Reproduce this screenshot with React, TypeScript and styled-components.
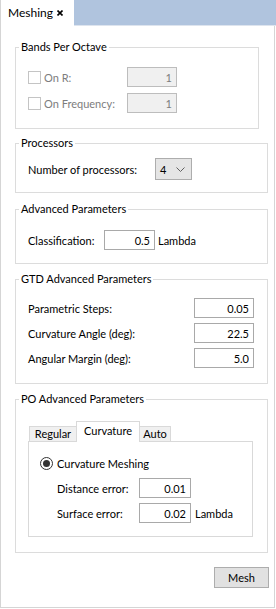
import React from 'react';
import styled, { createGlobalStyle } from 'styled-components';

const GlobalStyle = createGlobalStyle`
    html, body {
        margin: 0;
        padding: 0;
        background: #ffffff;
    }
    body {
        font-family: Lato, 'Liberation Sans', sans-serif;
        font-size: 11px;
        color: #000000;
    }
`;

type GroupProps = {
    $width: number;
    $pt: number;
    $pb: number;
    $mt: number;
};

const App = () => {
    return (
        <Window>
            <GlobalStyle />
            <TabStrip>
                <DocTab>
                    <span>Meshing</span>
                    <CloseIcon viewBox="0 0 6 6" width="6" height="6">
                        <path d="M0.5 0.5 L5.5 5.5 M5.5 0.5 L0.5 5.5" />
                    </CloseIcon>
                </DocTab>
            </TabStrip>
            <Panel>
                <Group $width={244} $pt={19} $pb={15} $mt={0}>
                    <GroupTitle>Bands Per Octave</GroupTitle>
                    <Rows $gap={6}>
                        <FieldRow $label={99}>
                            <CheckLabel>
                                <Checkbox />
                                <span>On R:</span>
                            </CheckLabel>
                            <NumberBox $w={50} disabled defaultValue="1" />
                        </FieldRow>
                        <FieldRow $label={99}>
                            <CheckLabel>
                                <Checkbox />
                                <span>On Frequency:</span>
                            </CheckLabel>
                            <NumberBox $w={50} disabled defaultValue="1" />
                        </FieldRow>
                    </Rows>
                </Group>

                <Group $width={253} $pt={14} $pb={12} $mt={14}>
                    <GroupTitle>Processors</GroupTitle>
                    <FieldRow $label={127} $h={22}>
                        <Label>Number of processors:</Label>
                        <Select>
                            <span>4</span>
                            <svg viewBox="0 0 9 5" width="9" height="5">
                                <path
                                    d="M0.5 0.5 L4.5 4.5 L8.5 0.5"
                                    fill="none"
                                    stroke="#606060"
                                    strokeWidth="1"
                                />
                            </svg>
                        </Select>
                    </FieldRow>
                </Group>

                <Group $width={253} $pt={20} $pb={13} $mt={16}>
                    <GroupTitle>Advanced Parameters</GroupTitle>
                    <FieldRow $label={76}>
                        <Label>Classification:</Label>
                        <NumberBox $w={51} readOnly defaultValue="0.5" />
                        <Unit $gap={3}>Lambda</Unit>
                    </FieldRow>
                </Group>

                <Group $width={253} $pt={18} $pb={15} $mt={15}>
                    <GroupTitle>GTD Advanced Parameters</GroupTitle>
                    <Rows $gap={5}>
                        <FieldRow $label={166}>
                            <Label>Parametric Steps:</Label>
                            <NumberBox $w={60} readOnly defaultValue="0.05" />
                        </FieldRow>
                        <FieldRow $label={166}>
                            <Label>Curvature Angle (deg):</Label>
                            <NumberBox $w={60} readOnly defaultValue="22.5" />
                        </FieldRow>
                        <FieldRow $label={166}>
                            <Label>Angular Margin (deg):</Label>
                            <NumberBox $w={60} readOnly defaultValue="5.0" />
                        </FieldRow>
                    </Rows>
                </Group>

                <Group $width={253} $pt={21} $pb={15} $mt={15}>
                    <GroupTitle>PO Advanced Parameters</GroupTitle>
                    <TabBar>
                        <PageTab $w={48}>Regular</PageTab>
                        <PageTab $w={64} $active>
                            Curvature
                        </PageTab>
                        <PageTab $w={32}>Auto</PageTab>
                    </TabBar>
                    <TabPage>
                        <RadioRow>
                            <Radio />
                            <span>Curvature Meshing</span>
                        </RadioRow>
                        <SubRows $gap={5}>
                            <FieldRow $label={82}>
                                <Label>Distance error:</Label>
                                <NumberBox
                                    $w={52}
                                    readOnly
                                    defaultValue="0.01"
                                />
                            </FieldRow>
                            <FieldRow $label={82}>
                                <Label>Surface error:</Label>
                                <NumberBox
                                    $w={52}
                                    readOnly
                                    defaultValue="0.02"
                                />
                                <Unit $gap={4}>Lambda</Unit>
                            </FieldRow>
                        </SubRows>
                    </TabPage>
                </Group>

                <MeshButton type="button">Mesh</MeshButton>
            </Panel>
        </Window>
    );
};

const Window = styled.div`
    width: 276px;
    height: 609px;
    display: flex;
    flex-direction: column;
    background: #ffffff;
    overflow: hidden;
`;

const TabStrip = styled.div`
    height: 26px;
    flex-shrink: 0;
    display: flex;
    background: #b0c4de;
    box-shadow: inset 0 -1px 0 #dde4ee;
`;

const DocTab = styled.div`
    width: 74px;
    height: 26px;
    box-sizing: border-box;
    display: flex;
    align-items: center;
    padding: 0 11px 1px 7px;
    background: #ffffff;
    border-left: 1px solid #d5d5d5;
    font-size: 12px;
`;

const CloseIcon = styled.svg`
    margin-left: auto;
    fill: none;
    stroke: #000000;
    stroke-width: 1.6;
`;

const Panel = styled.div`
    width: 275px;
    height: 582px;
    box-sizing: border-box;
    display: flex;
    flex-direction: column;
    padding: 21px 0 0 14px;
    border: 1px solid #d5d5d5;
    border-top: none;
`;

const Group = styled.section<GroupProps>`
    position: relative;
    width: ${({ $width }) => $width}px;
    box-sizing: border-box;
    margin-top: ${({ $mt }) => $mt}px;
    padding: ${({ $pt }) => $pt}px 0 ${({ $pb }) => $pb}px 12px;
    border: 1px solid #dcdcdc;
`;

const GroupTitle = styled.div`
    position: absolute;
    top: -9px;
    left: 3px;
    padding: 0 2px;
    line-height: 16px;
    background: #ffffff;
    white-space: nowrap;
`;

const Rows = styled.div<{ $gap: number }>`
    display: grid;
    row-gap: ${({ $gap }) => $gap}px;
`;

const SubRows = styled(Rows)`
    margin: 7px 0 0 17px;
`;

const FieldRow = styled.div<{ $label: number; $h?: number }>`
    display: grid;
    grid-template-columns: ${({ $label }) => $label}px auto auto;
    justify-content: start;
    align-items: center;
    height: ${({ $h }) => $h ?? 20}px;
`;

const Label = styled.span`
    white-space: nowrap;
`;

const Unit = styled.span<{ $gap: number }>`
    margin-left: ${({ $gap }) => $gap}px;
    white-space: nowrap;
`;

const CheckLabel = styled.label`
    display: flex;
    align-items: center;
    gap: 3px;
    color: #7d7d7d;
    white-space: nowrap;
`;

const Checkbox = styled.span`
    width: 13px;
    height: 13px;
    box-sizing: border-box;
    border: 1px solid #c4c4c4;
    background: #ffffff;
`;

const NumberBox = styled.input<{ $w: number }>`
    width: ${({ $w }) => $w}px;
    height: 20px;
    box-sizing: border-box;
    margin: 0;
    padding: 0 4px;
    border: 1px solid #a9a9a9;
    border-radius: 0;
    outline: none;
    background: #ffffff;
    color: #000000;
    font: inherit;
    text-align: right;

    &:disabled {
        background: #f0f0f0;
        border-color: #bdbdbd;
        color: #7d7d7d;
    }
`;

const Select = styled.div`
    width: 37px;
    height: 22px;
    box-sizing: border-box;
    display: flex;
    align-items: center;
    justify-content: space-between;
    padding: 0 6px 0 4px;
    border: 1px solid #adadad;
    background: #e5e5e5;
`;

const TabBar = styled.div`
    display: flex;
    align-items: flex-end;
    height: 20px;
    margin-left: 1px;
`;

const PageTab = styled.div<{ $w: number; $active?: boolean }>`
    position: relative;
    z-index: ${({ $active }) => ($active ? 1 : 0)};
    width: ${({ $w }) => $w}px;
    height: ${({ $active }) => ($active ? 21 : 15)}px;
    box-sizing: border-box;
    margin-left: -1px;
    margin-bottom: ${({ $active }) => ($active ? -1 : 0)}px;
    padding-top: ${({ $active }) => ($active ? 2 : 0)}px;
    border: 1px solid #d9d9d9;
    border-bottom: none;
    background: ${({ $active }) => ($active ? '#ffffff' : '#f0f0f0')};
    line-height: 14px;
    text-align: center;
    white-space: nowrap;

    &:first-child {
        margin-left: 0;
    }
`;

const TabPage = styled.div`
    width: 225px;
    box-sizing: border-box;
    padding: 13px 0 13px 11px;
    border: 1px solid #d9d9d9;
`;

const RadioRow = styled.label`
    display: flex;
    align-items: center;
    gap: 4px;
    height: 16px;
    white-space: nowrap;
`;

const Radio = styled.span`
    width: 13px;
    height: 13px;
    box-sizing: border-box;
    display: grid;
    place-items: center;
    border: 1px solid #333333;
    border-radius: 50%;
    background: #ffffff;

    &::after {
        content: '';
        width: 7px;
        height: 7px;
        border-radius: 50%;
        background: #333333;
    }
`;

const MeshButton = styled.button`
    align-self: flex-end;
    width: 55px;
    height: 21px;
    margin: 14px 5px 0 0;
    padding: 0;
    border: 1px solid #adadad;
    border-radius: 0;
    background: #e1e1e1;
    color: #000000;
    font: inherit;
`;

export default App;
